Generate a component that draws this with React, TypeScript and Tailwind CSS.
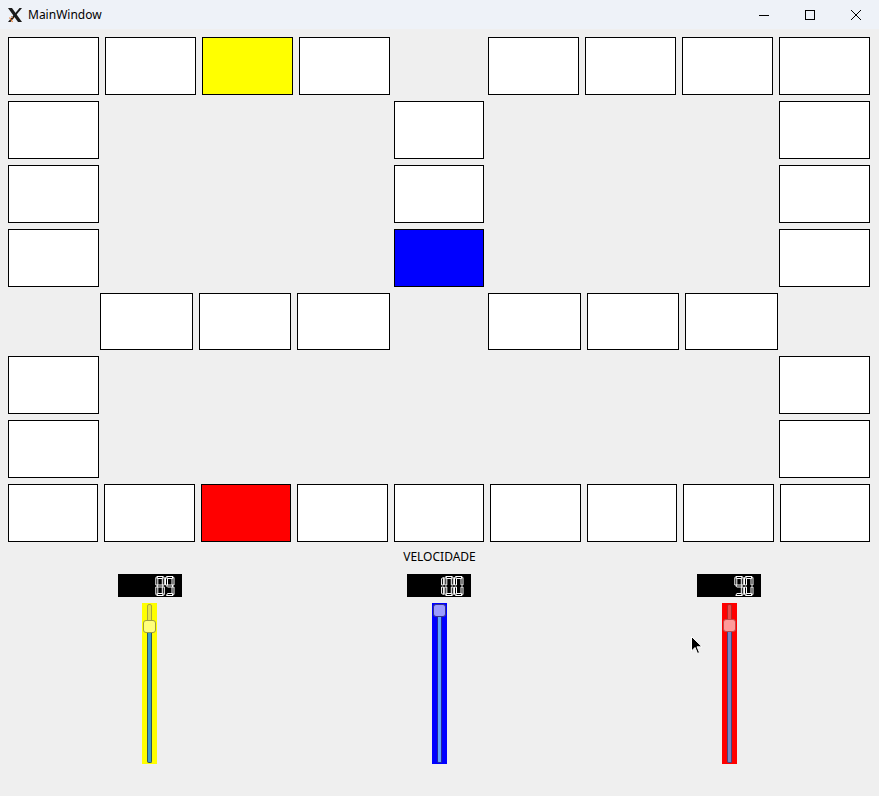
import clsx from 'clsx';

const W = 8.5;
const H = 19;
const T = 2;
const M = 9.5;

const SEGMENTS: Record<string, number[][]> = {
  a: [[1, 0], [W - 1, 0], [W - T, T], [T, T]],
  b: [[W, 1], [W, M - 1], [W - T, M - 1], [W - T, T]],
  c: [[W, M + 1], [W, H - 1], [W - T, H - T], [W - T, M + 1]],
  d: [[1, H], [W - 1, H], [W - T, H - T], [T, H - T]],
  e: [[0, M + 1], [T, M + 1], [T, H - T], [0, H - 1]],
  f: [[0, 1], [T, T], [T, M - 1], [0, M - 1]],
  g: [[1, M], [T, M - 1], [W - T, M - 1], [W - 1, M], [W - T, M + 1], [T, M + 1]],
};

const DIGITS: Record<string, string> = {
  '0': 'abcdef',
  '1': 'bc',
  '2': 'abged',
  '3': 'abgcd',
  '4': 'fgbc',
  '5': 'afgcd',
  '6': 'afgedc',
  '7': 'abc',
  '8': 'abcdefg',
  '9': 'abcdfg',
};

const LcdNumber = ({ value }: { value: number }) => {
  const chars = String(value).split('');
  return (
    <svg width="64" height="23" viewBox="0 0 64 23" className="block">
      <rect x="0" y="0" width="64" height="23" fill="#000" />
      {chars.map((ch, i) => {
        const x = 47.5 - (chars.length - 1 - i) * 9.7;
        return (
          <g key={i} transform={`translate(${x} 2.5)`}>
            {DIGITS[ch].split('').map((s) => (
              <polygon
                key={s}
                points={SEGMENTS[s].map((p) => p.join(',')).join(' ')}
                fill="none"
                stroke="#ffffff"
                strokeWidth="1"
              />
            ))}
          </g>
        );
      })}
    </svg>
  );
};

interface SliderProps {
  value: number;
  bg: string;
  topGroove: string;
  bottomGroove: string;
  handle: string;
}

const Slider = ({ value, bg, topGroove, bottomGroove, handle }: SliderProps) => {
  const handleTop = 1 + ((100 - value) / 100) * 146;
  return (
    <div className={clsx('relative h-[161px] w-[15px]', bg)}>
      <div className="absolute left-[5px] top-[1px] bottom-[1px] flex w-[5px] flex-col">
        <div className={clsx('rounded-t-[2px] border', topGroove)} style={{ height: handleTop + 6 }} />
        <div className={clsx('flex-1 rounded-b-[2px] border border-t-0', bottomGroove)} />
      </div>
      <div
        className={clsx('absolute left-[1px] h-[13px] w-[13px] rounded-[3px] border', handle)}
        style={{ top: handleTop }}
      />
    </div>
  );
};

const Cell = ({ fill = 'bg-white', className = '' }: { fill?: string; className?: string }) => (
  <div className={clsx('border border-black', fill, className)} />
);

const App = () => {
  return (
    <div className="relative h-[796px] w-[879px] overflow-hidden bg-[#efefef] font-['Noto_Sans',sans-serif] text-black">
      {/* barra de título */}
      <div className="flex h-[29px] items-center bg-[#eef2f8]">
        <svg width="16" height="16" viewBox="0 0 16 16" className="ml-[7px]">
          <polygon points="1,1 5,1 15,15 11,15" fill="#1a1a1a" />
          <polygon points="12.5,1 15,1 3.5,15 1,15" fill="#1a1a1a" />
          <path d="M2.5 10.5 L5.5 15" stroke="#e2792f" strokeWidth="1.2" />
          <path d="M4 9 L7 12" stroke="#e2792f" strokeWidth="0.8" />
        </svg>
        <span className="ml-[5px] text-[12px] leading-none">MainWindow</span>
        <div className="ml-auto flex h-full">
          <div className="flex w-[46px] items-center justify-center">
            <svg width="10" height="10" viewBox="0 0 10 10">
              <path d="M0 5.5 H10" stroke="#000" strokeWidth="1" />
            </svg>
          </div>
          <div className="flex w-[46px] items-center justify-center">
            <svg width="10" height="10" viewBox="0 0 10 10">
              <rect x="0.5" y="0.5" width="9" height="9" fill="none" stroke="#000" strokeWidth="1" />
            </svg>
          </div>
          <div className="flex w-[46px] items-center justify-center">
            <svg width="10" height="10" viewBox="0 0 10 10">
              <path d="M0 0 L10 10 M10 0 L0 10" stroke="#000" strokeWidth="1" />
            </svg>
          </div>
        </div>
      </div>

      {/* tabuleiro */}
      <div className="flex flex-col gap-[6px] pl-[8px] pr-[9px] pt-[8px]">
        <div className="flex h-[58px] justify-between">
          <div className="flex w-[382px] gap-[6px]">
            <Cell className="flex-1" />
            <Cell className="flex-1" />
            <Cell className="flex-1" fill="bg-[#ffff00]" />
            <Cell className="flex-1" />
          </div>
          <div className="flex w-[382px] gap-[6px]">
            <Cell className="flex-1" />
            <Cell className="flex-1" />
            <Cell className="flex-1" />
            <Cell className="flex-1" />
          </div>
        </div>
        <div className="flex h-[58px] justify-between">
          <Cell className="w-[91px]" />
          <Cell className="w-[90px]" />
          <Cell className="w-[91px]" />
        </div>
        <div className="flex h-[58px] justify-between">
          <Cell className="w-[91px]" />
          <Cell className="w-[90px]" />
          <Cell className="w-[91px]" />
        </div>
        <div className="flex h-[58px] justify-between">
          <Cell className="w-[91px]" />
          <Cell className="w-[90px]" fill="bg-[#0000ff]" />
          <Cell className="w-[91px]" />
        </div>
        <div className="flex h-[57px] justify-between px-[92px]">
          <div className="flex w-[290px] gap-[6px]">
            <Cell className="flex-1" />
            <Cell className="flex-1" />
            <Cell className="flex-1" />
          </div>
          <div className="flex w-[290px] gap-[6px]">
            <Cell className="flex-1" />
            <Cell className="flex-1" />
            <Cell className="flex-1" />
          </div>
        </div>
        <div className="flex h-[58px] justify-between">
          <Cell className="w-[91px]" />
          <Cell className="w-[91px]" />
        </div>
        <div className="flex h-[58px] justify-between">
          <Cell className="w-[91px]" />
          <Cell className="w-[91px]" />
        </div>
        <div className="flex h-[58px] gap-[6px]">
          <Cell className="flex-1" />
          <Cell className="flex-1" />
          <Cell className="flex-1" fill="bg-[#ff0000]" />
          <Cell className="flex-1" />
          <Cell className="flex-1" />
          <Cell className="flex-1" />
          <Cell className="flex-1" />
          <Cell className="flex-1" />
          <Cell className="flex-1" />
        </div>
      </div>

      {/* velocidades */}
      <div className="mt-[7px] text-center text-[12px] leading-[16px] text-black">VELOCIDADE</div>
      <div className="mt-[9px] grid grid-cols-3 px-[5px]">
        <div className="flex flex-col items-center gap-[6px]">
          <LcdNumber value={89} />
          <Slider
            value={89}
            bg="bg-[#ffff00]"
            topGroove="bg-[#e4e44c] border-[#a6a63e]"
            bottomGroove="bg-[#3c9dcc] border-[#2f5560]"
            handle="bg-[#ffff7c] border-[#9e9e3e]"
          />
        </div>
        <div className="flex flex-col items-center gap-[6px]">
          <LcdNumber value={100} />
          <Slider
            value={100}
            bg="bg-[#0000ff]"
            topGroove="bg-[#5a5af0] border-[#2a2aa8]"
            bottomGroove="bg-[#5ea6ff] border-[#2424a0]"
            handle="bg-[#9c9cff] border-[#34348a]"
          />
        </div>
        <div className="flex flex-col items-center gap-[6px]">
          <LcdNumber value={90} />
          <Slider
            value={90}
            bg="bg-[#ff0000]"
            topGroove="bg-[#e84c4c] border-[#b02a2a]"
            bottomGroove="bg-[#7888c6] border-[#424a80]"
            handle="bg-[#ff9a9a] border-[#c24848]"
          />
        </div>
      </div>

      {/* cursor do mouse */}
      <svg width="12" height="19" viewBox="0 0 12 19" className="absolute left-[691px] top-[636px]">
        <path d="M0.5 0.5 L0.5 15 L4 11.5 L6.5 17.5 L8.5 16.5 L6 10.8 L11 10.8 Z" fill="#000" stroke="#fff" strokeWidth="1" />
      </svg>
    </div>
  );
};

export default App;
